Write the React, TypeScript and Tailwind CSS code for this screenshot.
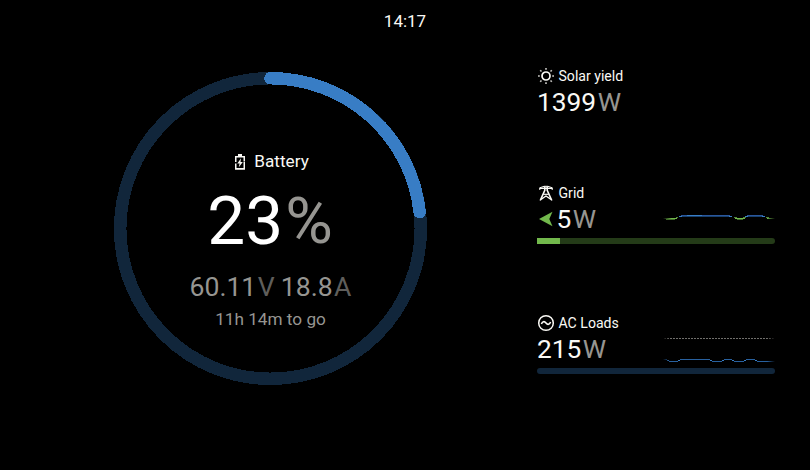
import type { ReactNode } from 'react';

function BatteryIcon() {
  return (
    <svg width="12" height="16" viewBox="0 0 12 16" fill="none">
      <path d="M4 0h4v2h3v5H9.5V3.5h-7V8H1V2h3z" fill="#faf9f5" />
      <path d="M1 9.5h1.5V14h7V7.5H11v8.3H1z" fill="#faf9f5" />
      <path d="M7 4.2 3.3 9.5h2.3L4.8 13.3 8.8 8H6.5z" fill="#faf9f5" />
    </svg>
  );
}

function SunIcon() {
  return (
    <svg width="18" height="18" viewBox="0 0 18 18" fill="none" stroke="#faf9f5">
      <circle cx="9" cy="9" r="4" strokeWidth="1.7" />
      <g strokeWidth="1.6" stroke="#c8c7c4">
        <path d="M9 1v1.8M9 15.2V17M1 9h1.8M15.2 9H17" />
        <path d="M3.2 3.2l1.3 1.3M13.5 13.5l1.3 1.3M3.2 14.8l1.3-1.3M13.5 4.5l1.3-1.3" />
      </g>
    </svg>
  );
}

function PylonIcon() {
  return (
    <svg width="18" height="18" viewBox="0 0 18 18" fill="none" stroke="#faf9f5" strokeWidth="1.6">
      <path d="M2.8 6V3.8L7 2.3h4l4.2 1.5V6" strokeWidth="1" />
      <path d="M2.5 4.3h13" strokeWidth="1.4" />
      <path d="M7.8 2.3v4L3.2 16.5M10.2 2.3v4l4.6 10.2" />
      <path d="M6.3 10.3h5.4" strokeWidth="1.2" />
      <path d="M4 15.4l5-3.4 5 3.4" strokeWidth="1.4" />
    </svg>
  );
}

function AcIcon() {
  return (
    <svg width="18" height="18" viewBox="0 0 18 18" fill="none" stroke="#faf9f5" strokeWidth="1.5">
      <circle cx="9" cy="9" r="7.3" />
      <path d="M4.4 10C5.6 7.2 7.4 7 9 9s3.4 1.8 4.6-1" strokeWidth="1.6" />
    </svg>
  );
}

function GridChart() {
  return (
    <svg className="-translate-y-[1px]" width="112" height="6" viewBox="0 0 112 6" fill="none" shapeRendering="crispEdges">
      <defs>
        <linearGradient id="grid-in"><stop stopColor="#72b84c" stopOpacity="0" /><stop offset=".6" stopColor="#72b84c" /></linearGradient>
        <linearGradient id="grid-out"><stop stopColor="#72b84c" /><stop offset="1" stopColor="#72b84c" stopOpacity="0" /></linearGradient>
      </defs>
      <rect x="0" y="3" width="14" height="1" fill="url(#grid-in)" />
      <rect x="3" y="4" width="9" height="1" fill="#426d2b" />
      <path d="M13 2.5h2M71 2.5h3M80 2.5h3M103 2.5h3" stroke="#52823a" />
      <path d="M72 3.5h10" stroke="#72b84c" />
      <path d="M74 4.5h6" stroke="#426d2b" />
      <rect x="104" y="3" width="8" height="1" fill="url(#grid-out)" />
      <path d="M18 .5h49M84 .5h16" stroke="#2a569c" />
      <path d="M24 .5h15" stroke="#387dc5" />
      <path d="M16 1.5h53M82 1.5h20" stroke="#18406d" />
      <path d="M16 1.5h3M66 1.5h3M82 1.5h3M99 1.5h3" stroke="#387dc5" />
    </svg>
  );
}

function LoadsChart() {
  return (
    <svg className="translate-y-[1px]" width="112" height="26" viewBox="0 0 112 26" fill="none" shapeRendering="crispEdges">
      <defs>
        <linearGradient id="loads-fade" gradientUnits="userSpaceOnUse" x1="0" x2="112" y1="0" y2="0">
          <stop stopColor="#fff" stopOpacity="0" /><stop offset=".06" stopColor="#fff" />
          <stop offset=".93" stopColor="#fff" /><stop offset="1" stopColor="#fff" stopOpacity="0" />
        </linearGradient>
        <mask id="loads-mask"><rect width="112" height="26" fill="url(#loads-fade)" /></mask>
      </defs>
      <g mask="url(#loads-mask)">
        <path d="M1 1.5h110" stroke="#706f6c" strokeDasharray="2 1" />
        <path d="M0 22.5h4M17 22.5h30M61 22.5h8M83 22.5h9" stroke="#28619f" />
        <path d="M4 23.5h2M15 23.5h2M47 23.5h2M59 23.5h2M69 23.5h2M81 23.5h2M92 23.5h2" stroke="#387dc5" />
        <path d="M6 24.5h9M49 24.5h10M71 24.5h10M94 24.5h18" stroke="#28619f" />
      </g>
    </svg>
  );
}

function Metric({ icon, label, value, arrow, chart, bar }: {
  icon: ReactNode; label: string; value: string; arrow?: boolean; chart?: ReactNode; bar?: ReactNode;
}) {
  return (
    <section className="w-[238px]">
      <div className="flex h-[18px] items-center gap-[3.5px] text-[14.1px] leading-[18px]">
        {icon}
        <span>{label}</span>
      </div>
      <div className="flex h-[36px] items-center pb-[2px] text-[26.3px] leading-[34px]">
        {arrow && (
          <svg className="mr-[4px] ml-[1.5px]" width="14" height="16" viewBox="0 0 14 16">
            <path d="M0 8 13.5 .8 10.3 8l3.2 7.2z" fill="#72b84c" />
          </svg>
        )}
        <span>{value}</span>
        <span className="ml-[1.5px] text-[#969591]">W</span>
        <div className="ml-auto">{chart}</div>
      </div>
      {bar}
    </section>
  );
}

export default function App() {
  return (
    <main className="flex h-[470px] w-[810px] flex-col overflow-hidden bg-black font-[Roboto,sans-serif] text-[#faf9f5]">
      <header className="flex h-[42px] shrink-0 items-center justify-center pt-[2px] text-[17px]">14:17</header>
      <div className="flex">
        <div className="w-[541px] pt-[29px] pl-[113px]">
          <div className="grid h-[315px] w-[315px]">
            <svg className="col-start-1 row-start-1" width="315" height="315" viewBox="0 0 315 315" fill="none" strokeWidth="12.5" shapeRendering="crispEdges">
              <circle cx="157.5" cy="157.5" r="150.3" stroke="#11263b" />
              <path d="M157.5 7.2A150.3 150.3 0 0 1 306.7 141.2" stroke="#387dc5" strokeLinecap="round" />
            </svg>
            <div className="col-start-1 row-start-1 flex flex-col items-center pt-[80px]">
              <div className="flex h-[22px] items-center gap-2 pl-[2px] text-[17.2px]">
                <BatteryIcon />
                <span>Battery</span>
              </div>
              <div className="mt-[8px] flex h-[80px] items-center pr-[1px] text-[67.5px] leading-[80px] text-white">
                <span>23</span>
                <span className="ml-[2px] text-[65px] text-[#969591]">%</span>
              </div>
              <div className="mt-[9px] flex h-[34px] items-center text-[26.6px] leading-[34px] text-[#969591]">
                <span>60.11</span><span className="ml-[1.5px] text-[#5f5e5b]">V</span>
                <span className="ml-[6px]">18.8</span><span className="ml-[1.5px] text-[#5f5e5b]">A</span>
              </div>
              <div className="mt-[4px] text-[17.2px] leading-[22px] text-[#969591]">11h 14m to go</div>
            </div>
          </div>
        </div>
        <div className="flex w-[269px] flex-col pt-[25px] -ml-[4px]">
          <Metric icon={<SunIcon />} label="Solar yield" value="1399" />
          <div className="h-[63px]" />
          <Metric
            icon={<PylonIcon />} label="Grid" value="5" arrow chart={<GridChart />}
            bar={<div className="h-[6px] overflow-hidden rounded-r-full bg-[#243b18]"><div className="h-full w-[23px] bg-[#72b84c]" /></div>}
          />
          <div className="h-[70px]" />
          <Metric
            icon={<AcIcon />} label="AC Loads" value="215" chart={<LoadsChart />}
            bar={<div className="h-[6px] rounded-full bg-[#11263b]" />}
          />
        </div>
      </div>
    </main>
  );
}
